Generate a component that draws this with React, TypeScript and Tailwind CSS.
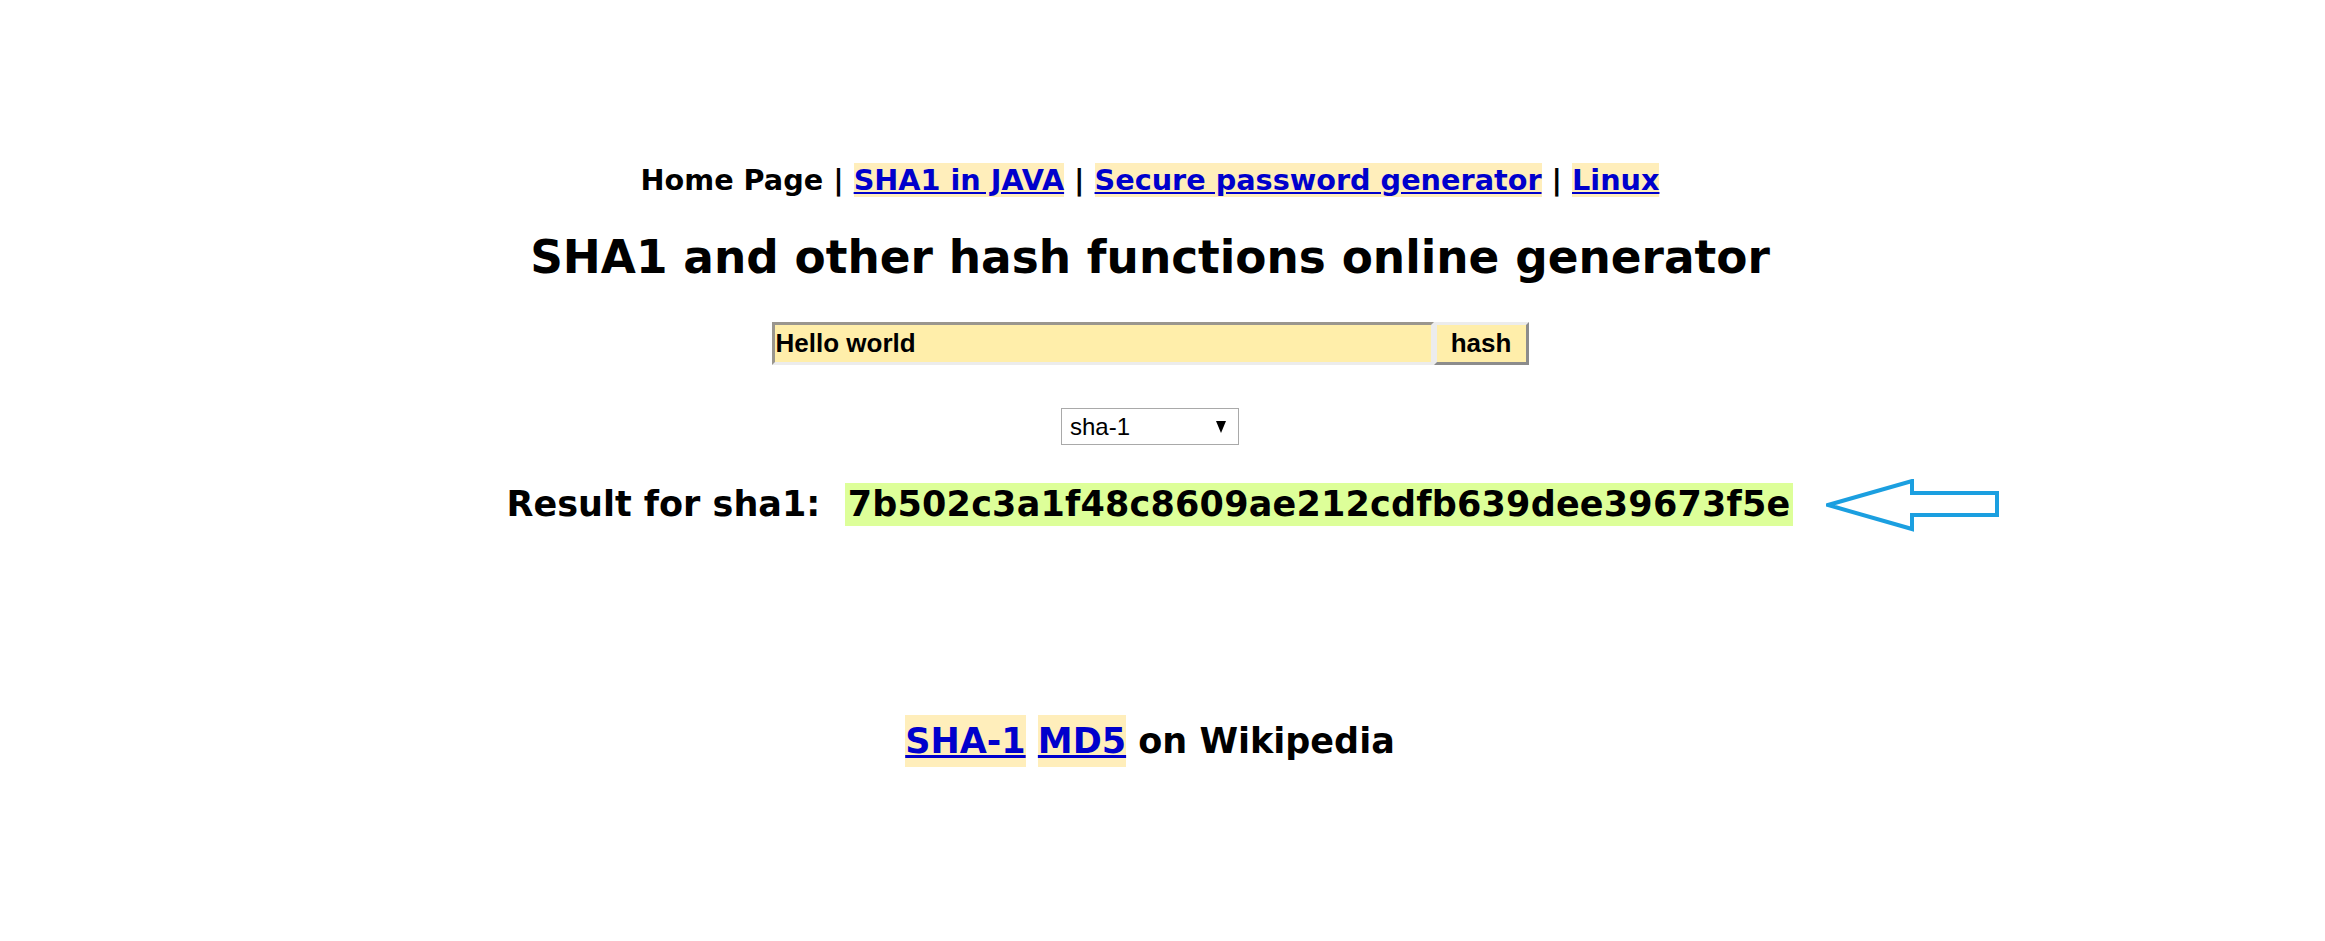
import React from "react";

const V = "font-['DejaVu_Sans',Verdana,sans-serif]";
const A = "font-['Liberation_Sans',Arial,sans-serif]";

export default function App() {
  return (
    <div className={`w-[2300px] bg-white text-black text-center ${V} font-bold min-h-[941px]`}>
      <div className="h-[163px]" />
      <nav className="h-[34px] text-[28.7px] leading-[34px] flex justify-center items-center whitespace-pre">
        <span>Home Page | </span>
        <a href="#" className="text-[#0000cc] underline bg-[#ffeebb]">SHA1 in JAVA</a>
        <span> | </span>
        <a href="#" className="text-[#0000cc] underline bg-[#ffeebb]">Secure password generator</a>
        <span> | </span>
        <a href="#" className="text-[#0000cc] underline bg-[#ffeebb]">Linux</a>
      </nav>
      <h1 className="mt-[36px] h-[50px] text-[45.4px] leading-[50px] font-bold">
        SHA1 and other hash functions online generator
      </h1>
      <div className="mt-[39px] flex justify-center">
        <div
          className={`w-[662px] h-[43px] bg-[#ffeeaa] border-[3px] border-t-[#9a968e] border-l-[#9a968e] border-b-[#ececec] border-r-[#ececec] text-left pl-[1px] text-[26px] leading-[37px] ${A} font-bold`}
        >
          Hello world
        </div>
        <div
          className={`w-[95px] h-[43px] bg-[#ffeeaa] border-[3px] border-t-[#ececec] border-l-[#ececec] border-b-[#8c8c8c] border-r-[#8c8c8c] text-[26px] leading-[37px] ${A} font-bold`}
        >
          hash
        </div>
      </div>
      <div className="mt-[43px] flex justify-center">
        <div
          className={`w-[178px] h-[37px] border border-[#a9a9a9] bg-white flex items-center justify-between pl-[8px] pr-[12px] ${A} font-normal text-[24px]`}
        >
          <span>sha-1</span>
          <svg width="10" height="12" viewBox="0 0 10 12">
            <path d="M0 0 L10 0 L5 12 Z" fill="#000" />
          </svg>
        </div>
      </div>
      <div className="mt-[38px] flex justify-center items-center h-[43px] text-[35px] whitespace-pre">
        <span>Result for sha1:  </span>
        <span className="relative bg-[#ddff99] h-[43px] leading-[43px] px-[3px] tracking-[0.2px]">
          7b502c3a1f48c8609ae212cdfb639dee39673f5e
          <svg
            className="absolute left-[calc(100%+33px)] top-[-4px]"
            width="176"
            height="54"
            viewBox="0 0 176 54"
          >
            <path
              d="M2 26 L86 2 L86 14 L171 14 L171 36 L86 36 L86 50 Z"
              fill="none"
              stroke="#1b9fe0"
              strokeWidth="4"
              strokeLinejoin="miter"
            />
          </svg>
        </span>
      </div>
      <div className="mt-[195px] h-[40px] flex justify-center items-center text-[35px] whitespace-pre">
        <a href="#" className="text-[#0000cc] underline bg-[#ffeebb]">SHA-1</a>
        <span> </span>
        <a href="#" className="text-[#0000cc] underline bg-[#ffeebb]">MD5</a>
        <span> on Wikipedia</span>
      </div>
    </div>
  );
}
